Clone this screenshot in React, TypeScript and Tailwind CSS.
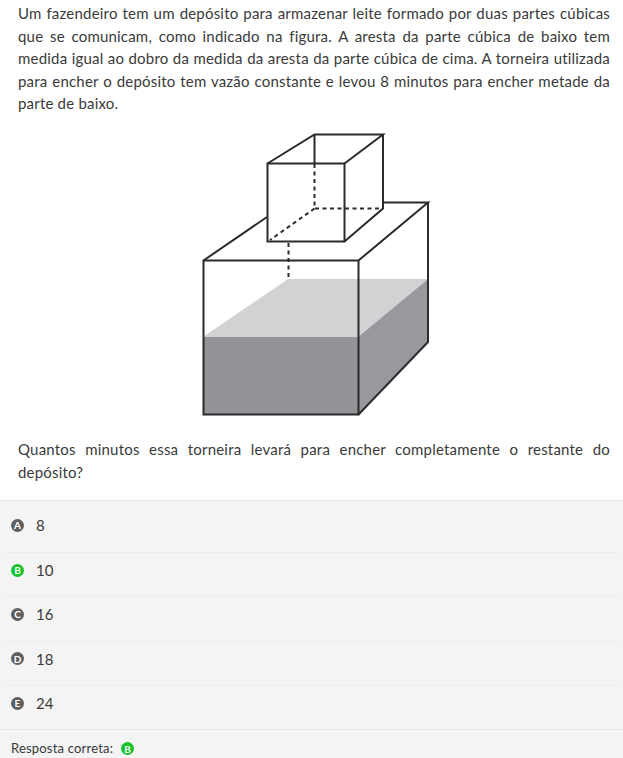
const alternatives = [
  { id: "A", text: "8" },
  { id: "B", text: "10", correct: true },
  { id: "C", text: "16" },
  { id: "D", text: "18" },
  { id: "E", text: "24" },
];

function Badge({ letter, correct }: { letter: string; correct?: boolean }) {
  return (
    <span
      className={`flex h-[13px] w-[13px] shrink-0 items-center justify-center rounded-full text-[10px] leading-none font-bold text-white ${
        correct ? "bg-[#16c32c]" : "bg-[#5f5f5f]"
      }`}
    >
      {letter}
    </span>
  );
}

function Figure() {
  return (
    <svg viewBox="200 130 232 288" className="block h-[288px] w-[232px]" fill="none">
      {/* water */}
      <polygon points="203,337 288,279 428,279 358,337" fill="#d1d2d4" />
      <polygon points="358,337 428,279 428,342 358,414" fill="#98999c" />
      <rect x="203" y="337" width="155" height="77" fill="#939497" />
      {/* big box */}
      <g stroke="#2b2b2b" strokeWidth="2">
        <rect x="203.5" y="260.5" width="155" height="154" />
        <path d="M203.5 260.5 267 217M358.5 260.5 428 202.5H383M428 202.5V342L358.5 414.5" />
        <path d="M288.5 243V279" strokeDasharray="4 3.5" />
      </g>
      {/* small cube */}
      <g stroke="#2b2b2b" strokeWidth="2">
        <rect x="267.5" y="163.5" width="77" height="78" fill="white" />
        <path d="M267.5 163.5 314.5 134.5H383L344.5 163.5M383 134.5V208.5L344.5 241.5M314.5 134.5V163" />
        <path d="M314.5 164V208.5H383M314.5 208.5 270 240" strokeDasharray="4 3.5" />
      </g>
    </svg>
  );
}

export default function App() {
  return (
    <div className="flex h-[758px] flex-col overflow-hidden bg-white font-['Lato','Open_Sans',sans-serif] text-[#3a3a3a]">
      <div className="pt-[2px] pr-[13px] pl-[18px]">
        <p className="text-justify text-[15px] leading-[22.5px] tracking-[0.2px]">
          Um fazendeiro tem um depósito para armazenar leite formado por duas partes cúbicas que se
          comunicam, como indicado na figura. A aresta da parte cúbica de baixo tem medida igual ao
          dobro da medida da aresta da parte cúbica de cima. A torneira utilizada para encher o
          depósito tem vazão constante e levou 8 minutos para encher metade da parte de baixo.
        </p>
        <div className="mt-[15px] mb-[20px] flex justify-center pl-[3px]">
          <Figure />
        </div>
        <p className="text-justify text-[15px] leading-[23px] tracking-[0.2px]">
          Quantos minutos essa torneira levará para encher completamente o restante do depósito?
        </p>
      </div>

      <div className="mt-[16px] border-y border-[#e4e4e4] bg-[#f4f4f4] pt-[7px]">
        {alternatives.map((alt, i) => (
          <div
            key={alt.id}
            className={`mx-[4px] flex h-[44.4px] items-center gap-[12px] pb-[9px] pl-[7px] ${
              i > 0 ? "border-t border-[#ececec]" : ""
            }`}
          >
            <Badge letter={alt.id} correct={alt.correct} />
            <span className="text-[15px]">{alt.text}</span>
          </div>
        ))}
      </div>
      <div className="flex flex-1 items-start gap-[8px] bg-[#f4f4f4] px-[11px] pt-[10px] text-[13px] leading-[16px] tracking-[0.2px]">
        <span>Resposta correta:</span>
        <span className="pt-[2px]">
          <Badge letter="B" correct />
        </span>
      </div>
    </div>
  );
}
